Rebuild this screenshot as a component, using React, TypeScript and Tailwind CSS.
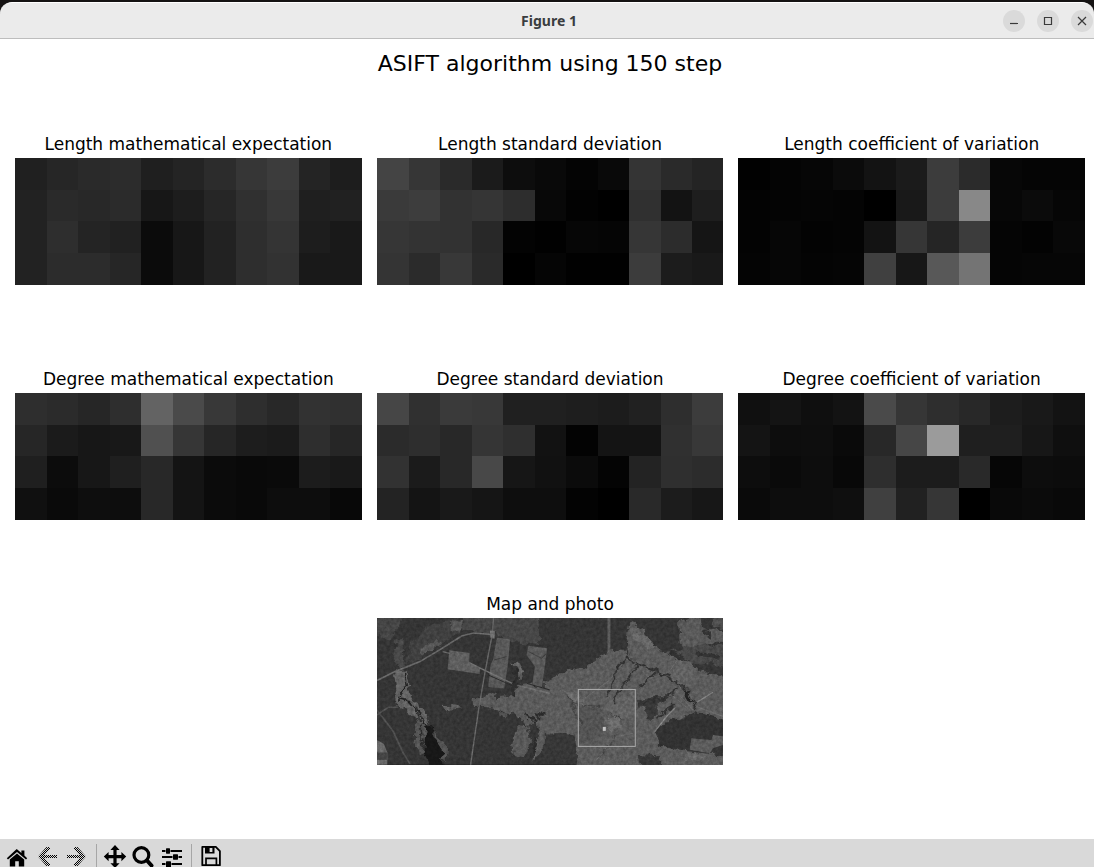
import type { ReactNode } from "react";

type Grid = number[][];

const lengthMean: Grid = [
  [32, 38, 42, 44, 31, 36, 44, 54, 60, 36, 29],
  [34, 42, 40, 43, 23, 29, 38, 48, 56, 31, 33],
  [34, 46, 36, 33, 11, 23, 34, 46, 52, 29, 25],
  [34, 44, 44, 38, 11, 23, 34, 46, 50, 25, 25],
];
const lengthStd: Grid = [
  [68, 54, 42, 27, 13, 9, 4, 9, 52, 42, 36],
  [58, 61, 50, 53, 45, 8, 2, 0, 48, 19, 30],
  [54, 51, 50, 40, 3, 1, 6, 5, 54, 44, 21],
  [52, 43, 56, 42, 0, 5, 1, 1, 60, 28, 25],
];
const lengthCv: Grid = [
  [1, 4, 6, 11, 19, 27, 60, 43, 7, 5, 5],
  [3, 4, 5, 4, 0, 25, 60, 136, 7, 11, 6],
  [3, 6, 3, 4, 19, 54, 37, 60, 5, 3, 8],
  [4, 6, 4, 5, 64, 23, 88, 116, 5, 6, 6],
];
const degreeMean: Grid = [
  [46, 43, 38, 46, 99, 74, 56, 46, 40, 50, 48],
  [38, 27, 23, 24, 80, 54, 38, 29, 27, 46, 38],
  [31, 12, 23, 31, 40, 20, 11, 9, 10, 28, 25],
  [16, 10, 14, 13, 40, 20, 11, 9, 13, 13, 8],
];
const degreeStd: Grid = [
  [70, 48, 58, 56, 32, 32, 30, 28, 33, 46, 60],
  [43, 46, 40, 53, 47, 18, 3, 20, 20, 48, 56],
  [50, 27, 40, 72, 22, 17, 11, 4, 35, 47, 44],
  [35, 20, 25, 21, 14, 14, 3, 0, 41, 28, 23],
];
const degreeCv: Grid = [
  [16, 20, 15, 19, 74, 54, 46, 40, 29, 25, 19],
  [20, 13, 14, 10, 40, 70, 155, 31, 31, 23, 15],
  [13, 10, 13, 8, 46, 28, 28, 41, 6, 13, 12],
  [10, 13, 13, 15, 64, 33, 54, 0, 9, 11, 9],
];

function Panel({ title, children }: { title: string; children: ReactNode }) {
  return (
    <figure>
      <figcaption className="text-center text-[17px] leading-7 whitespace-nowrap">{title}</figcaption>
      {children}
    </figure>
  );
}

function HeatMap({ title, data }: { title: string; data: Grid }) {
  return (
    <Panel title={title}>
      <svg
        viewBox="0 0 11 4"
        preserveAspectRatio="none"
        shapeRendering="crispEdges"
        className="block aspect-[347/127] w-full"
        role="img"
        aria-label={title}
      >
        {data.map((row, y) =>
          row.map((v, x) => (
            <rect key={`${x}-${y}`} x={x} y={y} width="1" height="1" fill={`rgb(${v},${v},${v})`} />
          )),
        )}
      </svg>
    </Panel>
  );
}

function SatelliteMap() {
  return (
    <svg
      viewBox="0 0 347 147"
      preserveAspectRatio="none"
      className="block aspect-[347/147] w-full"
      role="img"
      aria-label="Map and photo"
    >
      <defs>
        <filter id="ragged" x="0" y="0" width="347" height="147" filterUnits="userSpaceOnUse" colorInterpolationFilters="sRGB">
          <feTurbulence type="fractalNoise" baseFrequency="0.13" numOctaves="4" seed="4" result="n" />
          <feDisplacementMap in="SourceGraphic" in2="n" scale="9" xChannelSelector="R" yChannelSelector="G" />
          <feGaussianBlur stdDeviation="0.5" />
        </filter>
        <filter id="grain" x="0" y="0" width="347" height="147" filterUnits="userSpaceOnUse" colorInterpolationFilters="sRGB">
          <feTurbulence type="fractalNoise" baseFrequency="0.3" numOctaves="3" seed="9" />
          <feColorMatrix values="1 0 0 0 0  1 0 0 0 0  1 0 0 0 0  0 0 0 0 1" result="g" />
          <feComposite in="SourceGraphic" in2="g" operator="arithmetic" k1="0.5" k2="0.79" k3="0" k4="0" />
        </filter>
      </defs>
      <g filter="url(#grain)">
        <rect width="347" height="147" fill="#333333" />
        <g filter="url(#ragged)">
          {/* western half */}
          <g transform="translate(-7 -8) scale(0.33333)">
            <path d="M0 0H120L60 85H0Z" fill="#424242" />
            <path d="M275 0H508V105L420 95 375 70 280 65Z" fill="#444444" />
            <path d="M130 95 L170 50 240 28 275 30 270 65 200 110 150 145 105 160Z" fill="#3e3e3e" />
            <path d="M245 35 275 30 275 60 250 65ZM150 120 200 92 215 98 160 138Z" fill="#545454" />
            <path d="M80 88H98V120L104 160 90 182 75 150Z" fill="#464646" />
            <path d="M78 185 108 180 118 240 130 275 165 300 180 350 160 360 140 325 110 300 80 285 72 262 85 240Z" fill="#5f5f5f" />
            <path d="M135 330 168 340 170 420 150 430 135 400ZM190 360 210 385 235 410 230 455 205 420Z" fill="#505050" />
            <path d="M213 285 240 285 275 290 275 296 235 300 230 308Z" fill="#5a5a5a" />
            <path d="M311 262 340 258 365 246 385 250 370 262 430 258 445 225 470 220 530 240 550 250V380L535 420 500 440 485 455 490 400 510 380 500 340 470 345 440 310 400 308 370 295 312 294Z" fill="#575757" />
            <path d="M440 345 475 350 485 395 460 445 435 440 430 400Z" fill="#555555" />
            <path d="M420 155 445 160 455 175 465 180 450 215 440 180Z" fill="#5e5e5e" />
            <path d="M385 305 410 312 408 325 390 320Z" fill="#505050" />
          </g>
          {/* eastern half */}
          <g transform="translate(173 -8) scale(0.33333)">
            <path d="M-15 215 50 180 110 170 150 140 180 122 215 125 230 110 242 35 275 60 300 95 345 130 385 140 425 160 455 185 540 200V335L440 305 400 325 340 340 315 370 330 410 385 420 540 440V490H75L85 440 80 420 30 370 -15 370Z" fill="#585858" />
            <path d="M385 38 430 24 450 28 470 60 540 65V105L480 95 440 110 405 115 390 95Z" fill="#565656" />
            <path d="M488 0H540V50L490 55Z" fill="#4c4c4c" />
            <path d="M345 130 400 115 470 100 540 115V180L480 160 440 165 395 140Z" fill="#464646" />
            <path d="M355 190 395 145 440 180 410 225 385 215Z" fill="#5e5e5e" />
            <path d="M320 370 350 335 400 330 440 305 540 335V390L430 385 415 420 330 410Z" fill="#303030" />
            <path d="M265 270 330 262 365 255 320 290 325 310 300 335 282 290 265 290Z" fill="#363636" />
            <path d="M-15 370 30 372 70 375 85 440 60 455 -15 440Z" fill="#353535" />
            <path d="M265 435 330 440 345 490H280Z" fill="#353535" />
            <path d="M88 290 160 295 165 360 120 400 88 390Z" fill="#505050" />
            <path d="M175 265 255 250V320L210 330 165 300Z" fill="#5f5f5f" />
            <path d="M240 60 295 80 320 115 280 110 250 85Z" fill="#646464" />
            <path d="M168 325 205 320 215 345 180 365Z" fill="#686868" />
            <path d="M30 240 70 245 100 265 110 285 70 270Z" fill="#656565" />
            <path d="M410 430 470 435 465 450 405 450Z" fill="#656565" />
          </g>
        </g>
        {/* fields with straight edges */}
        <g transform="translate(-7 -8) scale(0.33333)">
          <path d="M21 390 42 402 52 428 52 465H21Z" fill="#656565" />
          <path d="M21 428H52V450H21Z" fill="#424242" />
          <path d="M238 121 299 129 298 158 331 174 329 192 233 178Z" fill="#5b5b5b" />
          <path d="M381 83 421 88 414 165 403 236 355 231 362 165 370 148Z" fill="#565656" />
          <path d="M476 107 532 115 516 234 487 226 495 170 470 135Z" fill="#565656" />
          <path d="M476 125 515 145 530 130M372 150 410 140" fill="none" stroke="#3c3c3c" strokeWidth="3" />
          <path d="M21 212 75 185 150 155 215 116 275 78 310 69 370 74" fill="none" stroke="#646464" strokeWidth="5" />
          <path d="M371 24 367 74 346 183 326 300 302 465" fill="none" stroke="#626262" strokeWidth="4" />
          <path d="M218 125 240 130M298 158 346 182 440 226 540 250" fill="none" stroke="#696969" strokeWidth="4" />
          <path d="M355 195 440 233M470 220 540 240" fill="none" stroke="#292929" strokeWidth="3" />
          <path d="M21 300 70 365 100 430 120 462M21 315 55 292 85 292" fill="none" stroke="#4c4c4c" strokeWidth="5" />
          <path d="M360 62 375 62 374 86 362 84Z" fill="#6a6a6a" />
        </g>
        <g transform="translate(173 -8) scale(0.33333)">
          <path d="M425 385 485 390 490 375 522 380V405L490 415 480 430 420 420Z" fill="#585858" />
          <path d="M173 24H182V128H173Z" fill="#585858" />
          <path d="M315 365 350 320 375 295M440 278 490 247" fill="none" stroke="#7c7c7c" strokeWidth="4" />
          <path d="M105 265 180 210 225 150M265 170 300 205 350 190 400 240M360 250 420 300M375 240 430 300M390 140 355 190M140 450 200 380 250 370M440 290 522 320" fill="none" stroke="#666666" strokeWidth="3" />
        </g>
        {/* rivers, ravines and lakes */}
        <g filter="url(#ragged)">
          <g transform="translate(-7 -8) scale(0.33333)">
            <path d="M170 350 185 345 190 380 215 420 228 490H185L158 428Z" fill="#171717" />
            <path d="M100 190 106 230 95 250 85 270 118 275 130 290 150 310 160 335 178 350" fill="none" stroke="#222222" strokeWidth="5" />
            <path d="M140 290 155 370 160 420" fill="none" stroke="#2b2b2b" strokeWidth="4" />
            <path d="M435 180 442 200 430 235 432 260M465 310 500 340M500 380 485 440M520 310 500 320 510 330" fill="none" stroke="#2b2b2b" strokeWidth="8" />
          </g>
          <g transform="translate(173 -8) scale(0.33333)">
            <path d="M228 115 232 145 215 165 200 180 192 210 170 265M232 148 275 165 320 185 365 205 400 225 425 270 440 300M262 165 240 205 205 245 190 290M320 190 270 230M385 235 330 270 265 280M370 285 320 325" fill="none" stroke="#303030" strokeWidth="6" />
            <path d="M400 235 415 240 430 275 415 275Z" fill="#222222" />
            <path d="M60 265 80 320 100 345M45 255 85 290M180 310 215 330M200 375 150 440M100 285 150 290" fill="none" stroke="#424242" strokeWidth="4" />
            <path d="M360 130 400 145M440 130 510 145M460 60 485 80" fill="none" stroke="#303030" strokeWidth="12" />
          </g>
        </g>
      </g>
      <path d="M226 109H229V113H226Z" fill="#c4c4c4" />
      <rect x="201.5" y="71.5" width="57" height="57" fill="none" stroke="#adadad" />
    </svg>
  );
}

function ToolButton({ label, disabled, children }: { label: string; disabled?: boolean; children: ReactNode }) {
  return (
    <button type="button" aria-label={label} disabled={disabled} className="h-7 w-7 shrink-0">
      <svg viewBox="0 0 28 28" className="block h-7 w-7" fill="#000000">
        {children}
      </svg>
    </button>
  );
}

function Toolbar() {
  return (
    <div role="toolbar" aria-label="Navigation" className="flex h-7 gap-px overflow-hidden bg-[#d9d9d9] pl-[3px]">
      <ToolButton label="Home">
        <path d="M14 10.2 L18.4 14 V11.4 H21.4 V16.6 L24.2 19.2 L23 20.6 L14 13 L5 20.6 L3.8 19.2 L12.6 11 Q14 9.8 14 10.2Z" />
        <path d="M14 14.4 L21.2 20.4 V27.4 H15.8 V22.2 H12.2 V27.4 H6.8 V20.4Z" />
      </ToolButton>
      <ToolButton label="Back" disabled>
        <defs>
          <pattern id="stipple" width="2" height="2" patternUnits="userSpaceOnUse">
            <path d="M0 0H1V1H0ZM1 1H2V2H1Z" fill="#000000" shapeRendering="crispEdges" />
          </pattern>
        </defs>
        <path d="M6 17.5 14.5 8H18V10L12.5 16H25V19H12.5L18 25V27H14.5Z" fill="url(#stipple)" />
      </ToolButton>
      <ToolButton label="Forward" disabled>
        <path d="M25 17.5 16.5 8H13V10L18.5 16H6V19H18.5L13 25V27H16.5Z" fill="url(#stipple)" />
      </ToolButton>
      <span className="mt-[5px] mr-[3px] ml-[6px] w-px bg-[#a6a6a6]" />
      <ToolButton label="Pan">
        <path d="M14 6 L18.6 11 H15.6 V16 H20.4 V13 L25.2 17.6 L20.4 22.2 V19.2 H15.6 V24.2 H18.6 L14 29 L9.4 24.2 H12.4 V19.2 H7.6 V22.2 L2.8 17.6 L7.6 13 V16 H12.4 V11 H9.4Z" />
      </ToolButton>
      <ToolButton label="Zoom">
        <circle cx="11.4" cy="16" r="7.4" fill="none" stroke="#000000" strokeWidth="3.2" />
        <path d="M17 21.5 L21.5 26.5" stroke="#000000" strokeWidth="4" strokeLinecap="round" />
      </ToolButton>
      <ToolButton label="Subplots">
        <path d="M3 11H23V13H3ZM3 17H23V19H3ZM3 24H23V26H3Z" />
        <path d="M7 9H11V15H7ZM14 15H19V21H14ZM7 22H12V28H7Z" stroke="#d9d9d9" />
        <path d="M7 9.5H11V14.5H7ZM14 15.5H19V20.5H14ZM7 22.5H12V28H7Z" />
      </ToolButton>
      <span className="mt-[5px] mr-[4px] ml-[3px] w-px bg-[#a6a6a6]" />
      <ToolButton label="Save">
        <path
          d="M5.3 7.9H18.8L22.9 12.2V26.2H5.3Z"
          fill="none"
          stroke="#000000"
          strokeWidth="1.8"
          strokeLinejoin="round"
        />
        <path fillRule="evenodd" d="M8 7H17.5V14.6H8ZM12.6 9V13H15.4V9Z" />
        <path d="M9 26V19.4H19.4V26" fill="none" stroke="#000000" strokeWidth="1.7" />
      </ToolButton>
    </div>
  );
}

function WindowButton({ label, d }: { label: string; d: string }) {
  return (
    <button type="button" aria-label={label} className="h-[22px] w-[22px] rounded-full bg-[#dadada]">
      <svg viewBox="0 0 22 22" className="block" fill="none" stroke="#3a3a3a" strokeWidth="1.2">
        <path d={d} />
      </svg>
    </button>
  );
}

function TitleBar() {
  return (
    <div className="bg-[#151313] pt-[2px]">
      <header className="grid h-[37px] grid-cols-[1fr_auto_1fr] items-center rounded-t-xl border-t border-b border-t-white border-b-[#bdbdbd] bg-[#ebebeb] pr-px pl-[5px]">
        <span />
        <h1 className="font-['Noto_Sans',sans-serif] text-sm font-bold text-[#3a3d3f]">Figure 1</h1>
        <div className="flex justify-end gap-3">
          <WindowButton label="Minimize" d="M7 13.5H15" />
          <WindowButton label="Maximize" d="M7.5 7.5H14.5V14.5H7.5Z" />
          <WindowButton label="Close" d="M7 7L15 15M15 7L7 15" />
        </div>
      </header>
    </div>
  );
}

export default function App() {
  return (
    <div className="flex min-h-screen flex-col bg-white font-['DejaVu_Sans',sans-serif] text-black">
      <TitleBar />
      <main className="flex-1 pt-[9px] pr-[9px] pl-[15px]">
        <h2 className="text-center text-[22px] leading-8">ASIFT algorithm using 150 step</h2>
        <div className="mt-[50px] grid grid-cols-3 gap-x-[15px] gap-y-20">
          <HeatMap title="Length mathematical expectation" data={lengthMean} />
          <HeatMap title="Length standard deviation" data={lengthStd} />
          <HeatMap title="Length coefficient of variation" data={lengthCv} />
          <HeatMap title="Degree mathematical expectation" data={degreeMean} />
          <HeatMap title="Degree standard deviation" data={degreeStd} />
          <HeatMap title="Degree coefficient of variation" data={degreeCv} />
        </div>
        <div className="mt-[70px] grid grid-cols-3 gap-x-[15px]">
          <div className="col-start-2">
            <Panel title="Map and photo">
              <SatelliteMap />
            </Panel>
          </div>
        </div>
      </main>
      <Toolbar />
    </div>
  );
}
